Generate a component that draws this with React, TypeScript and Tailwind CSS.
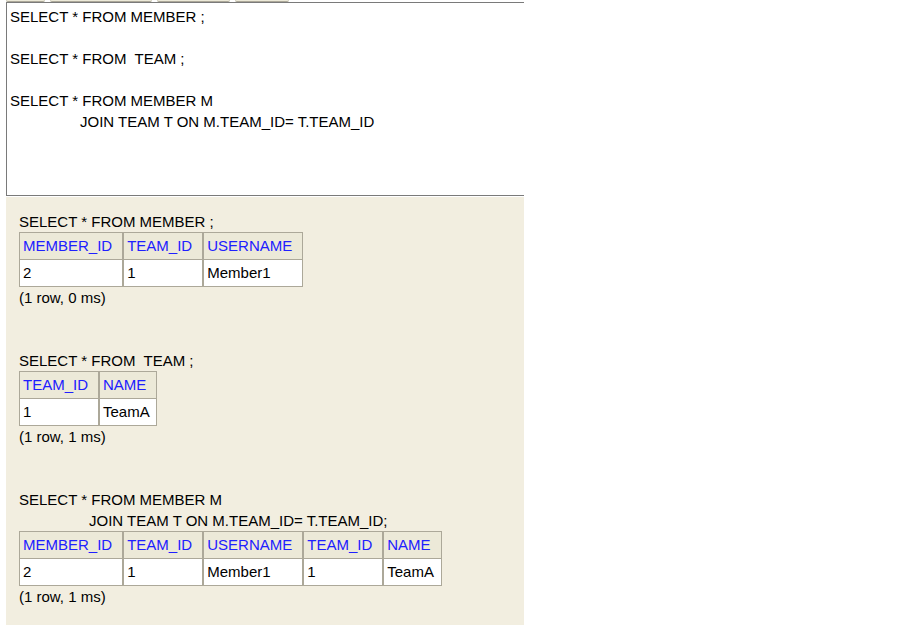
type ResultProps = {
  sql: string[];
  columns: string[];
  rows: string[][];
  status: string;
};

const font = "font-['Liberation_Sans',Arial,sans-serif]";

function ResultBlock({ sql, columns, rows, status }: ResultProps) {
  return (
    <div>
      {sql.map((line, i) => (
        <div key={i} className={i > 0 ? "pl-[70px]" : ""}>
          {line}
        </div>
      ))}
      <table className="border-separate border-spacing-0">
        <thead>
          <tr>
            {columns.map((c, i) => (
              <th
                key={i}
                className={`border-y border-[#aca899] bg-[#ece9d8] p-0 pl-[3px] pr-[10px] text-left font-normal leading-[26px] text-[#2020ff] ${
                  i === 0 ? "border-l" : ""
                } ${i < columns.length - 1 ? "border-r-2" : "border-r"}`}
              >
                {c}
              </th>
            ))}
          </tr>
        </thead>
        <tbody>
          {rows.map((r, ri) => (
            <tr key={ri}>
              {r.map((v, i) => (
                <td
                  key={i}
                  className={`border-b border-[#aca899] bg-white p-0 pl-[3px] pr-[5px] leading-[26px] ${
                    i === 0 ? "border-l" : ""
                  } ${i < r.length - 1 ? "border-r-2" : "border-r"}`}
                >
                  {v}
                </td>
              ))}
            </tr>
          ))}
        </tbody>
      </table>
      <div>{status}</div>
    </div>
  );
}

export default function App() {
  return (
    <div className={`h-[625px] w-[897px] overflow-hidden bg-white text-[15px] leading-[21px] text-black ${font}`}>
      <div className="ml-[6px] flex h-[625px] w-[518px] flex-col overflow-hidden">
        {/* button strip cut off at top */}
        <div className="flex h-[2px] gap-[5px]">
          <div className="h-[2px] w-[39px] rounded-b-[2px] border-b border-[#aca899] bg-[#ece9d8]" />
          <div className="h-[2px] w-[102px] rounded-b-[2px] border-b border-[#aca899] bg-[#ece9d8]" />
          <div className="h-[2px] w-[73px] rounded-b-[2px] border-b border-[#aca899] bg-[#ece9d8]" />
          <div className="h-[2px] w-[54px] rounded-b-[2px] border-b border-[#aca899] bg-[#ece9d8]" />
        </div>

        {/* sql editor */}
        <div className="h-[194px] w-[540px] shrink-0 border border-[#7a7a7a] pl-[3px] pt-[3px]">
          <div>SELECT * FROM MEMBER ;</div>
          <div>&nbsp;</div>
          <div>SELECT * FROM&nbsp; TEAM ;</div>
          <div>&nbsp;</div>
          <div>SELECT * FROM MEMBER M</div>
          <div className="pl-[70px]">JOIN TEAM T ON M.TEAM_ID= T.TEAM_ID</div>
        </div>

        {/* results */}
        <div className="mt-[1px] flex flex-1 flex-col gap-[42px] bg-[#f2eee0] pl-[13px] pt-[14px]">
          <ResultBlock
            sql={["SELECT * FROM MEMBER ;"]}
            columns={["MEMBER_ID", "TEAM_ID", "USERNAME"]}
            rows={[["2", "1", "Member1"]]}
            status="(1 row, 0 ms)"
          />
          <ResultBlock
            sql={["SELECT * FROM\u00a0 TEAM ;"]}
            columns={["TEAM_ID", "NAME"]}
            rows={[["1", "TeamA"]]}
            status="(1 row, 1 ms)"
          />
          <ResultBlock
            sql={["SELECT * FROM MEMBER M", "JOIN TEAM T ON M.TEAM_ID= T.TEAM_ID;"]}
            columns={["MEMBER_ID", "TEAM_ID", "USERNAME", "TEAM_ID", "NAME"]}
            rows={[["2", "1", "Member1", "1", "TeamA"]]}
            status="(1 row, 1 ms)"
          />
        </div>
      </div>
    </div>
  );
}
